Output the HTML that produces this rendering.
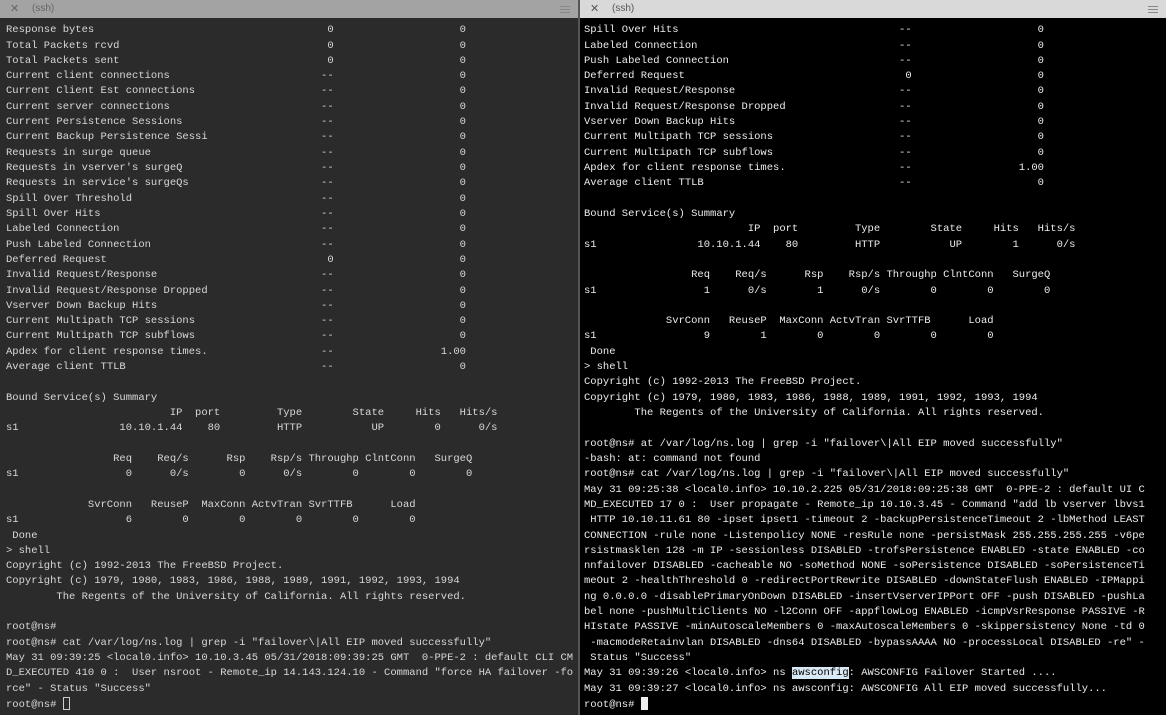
<!DOCTYPE html>
<html><head><meta charset="utf-8"><style>
*{margin:0;padding:0;box-sizing:border-box}
body{width:1166px;height:715px;overflow:hidden;background:#000;font-family:"Liberation Mono",monospace;font-size:10.5px;position:relative}
.pane{position:absolute;top:0;height:715px;overflow:hidden}
.L{left:0;width:578px;background:#2b2b2b;color:#d8d8d8}
.R{left:580px;width:586px;background:#000;color:#ececec}
.div{position:absolute;left:578px;top:0;width:2px;height:715px;background:#555}
.tb{height:18px;position:relative;font-family:"Liberation Sans",sans-serif;font-size:10px;line-height:18px}
.L .tb{background:#a3a3a3;color:#666}
.R .tb{background:#d9d9d9;color:#555}
.tb .x{position:absolute;left:10px;font-size:11px}
.tb .t{position:absolute;left:32px}
.tb .m{position:absolute;right:8px;top:6px;width:10px;height:7px;border-top:1px solid #888;border-bottom:1px solid #888}
.tb .m:after{content:"";position:absolute;left:0;right:0;top:2px;border-top:1px solid #888}
.body{position:absolute;top:23.2px;left:6px;right:0}
.R .body{left:4px}
.r{position:relative;height:15.32px;line-height:15.32px;white-space:pre}
.r i{position:absolute;top:0;font-style:normal}
.a{left:50ch}.b{left:51ch}.c{left:72ch}
.hl{background:#d8e8f4;color:#000}
.cur{display:inline-block;width:7px;height:13px;vertical-align:-3px;border:1px solid #ccc}
.curR{display:inline-block;width:7px;height:13px;vertical-align:-3px;background:#eee}
</style></head><body>
<div class="pane L">
<div class="tb"><span class="x">✕</span><span class="t">(ssh)</span><span class="m"></span></div>
<div class="body">
<div class="r">Response bytes<i class="b">0</i><i class="c">0</i></div>
<div class="r">Total Packets rcvd<i class="b">0</i><i class="c">0</i></div>
<div class="r">Total Packets sent<i class="b">0</i><i class="c">0</i></div>
<div class="r">Current client connections<i class="a">--</i><i class="c">0</i></div>
<div class="r">Current Client Est connections<i class="a">--</i><i class="c">0</i></div>
<div class="r">Current server connections<i class="a">--</i><i class="c">0</i></div>
<div class="r">Current Persistence Sessions<i class="a">--</i><i class="c">0</i></div>
<div class="r">Current Backup Persistence Sessi<i class="a">--</i><i class="c">0</i></div>
<div class="r">Requests in surge queue<i class="a">--</i><i class="c">0</i></div>
<div class="r">Requests in vserver's surgeQ<i class="a">--</i><i class="c">0</i></div>
<div class="r">Requests in service's surgeQs<i class="a">--</i><i class="c">0</i></div>
<div class="r">Spill Over Threshold<i class="a">--</i><i class="c">0</i></div>
<div class="r">Spill Over Hits<i class="a">--</i><i class="c">0</i></div>
<div class="r">Labeled Connection<i class="a">--</i><i class="c">0</i></div>
<div class="r">Push Labeled Connection<i class="a">--</i><i class="c">0</i></div>
<div class="r">Deferred Request<i class="b">0</i><i class="c">0</i></div>
<div class="r">Invalid Request/Response<i class="a">--</i><i class="c">0</i></div>
<div class="r">Invalid Request/Response Dropped<i class="a">--</i><i class="c">0</i></div>
<div class="r">Vserver Down Backup Hits<i class="a">--</i><i class="c">0</i></div>
<div class="r">Current Multipath TCP sessions<i class="a">--</i><i class="c">0</i></div>
<div class="r">Current Multipath TCP subflows<i class="a">--</i><i class="c">0</i></div>
<div class="r">Apdex for client response times.<i class="a">--</i><i style="left:69ch">1.00</i></div>
<div class="r">Average client TTLB<i class="a">--</i><i class="c">0</i></div>
<div class="r"> </div>
<div class="r">Bound Service(s) Summary</div>
<div class="r"><i style="left:26ch">IP</i><i style="left:30ch">port</i><i style="left:43ch">Type</i><i style="left:55ch">State</i><i style="left:65ch">Hits</i><i style="left:72ch">Hits/s</i></div>
<div class="r">s1<i style="left:18ch">10.10.1.44</i><i style="left:32ch">80</i><i style="left:43ch">HTTP</i><i style="left:58ch">UP</i><i style="left:68ch">0</i><i style="left:75ch">0/s</i></div>
<div class="r"> </div>
<div class="r"><i style="left:17ch">Req</i><i style="left:24ch">Req/s</i><i style="left:35ch">Rsp</i><i style="left:42ch">Rsp/s</i><i style="left:48ch">Throughp</i><i style="left:57ch">ClntConn</i><i style="left:68ch">SurgeQ</i></div>
<div class="r">s1<i style="left:19ch">0</i><i style="left:26ch">0/s</i><i style="left:37ch">0</i><i style="left:44ch">0/s</i><i style="left:55ch">0</i><i style="left:64ch">0</i><i style="left:73ch">0</i></div>
<div class="r"> </div>
<div class="r"><i style="left:13ch">SvrConn</i><i style="left:23ch">ReuseP</i><i style="left:31ch">MaxConn</i><i style="left:39ch">ActvTran</i><i style="left:48ch">SvrTTFB</i><i style="left:61ch">Load</i></div>
<div class="r">s1<i style="left:19ch">6</i><i style="left:28ch">0</i><i style="left:37ch">0</i><i style="left:46ch">0</i><i style="left:55ch">0</i><i style="left:64ch">0</i></div>
<div class="r"> Done</div>
<div class="r">&gt; shell</div>
<div class="r">Copyright (c) 1992-2013 The FreeBSD Project.</div>
<div class="r">Copyright (c) 1979, 1980, 1983, 1986, 1988, 1989, 1991, 1992, 1993, 1994</div>
<div class="r">        The Regents of the University of California. All rights reserved.</div>
<div class="r"> </div>
<div class="r">root@ns#</div>
<div class="r">root@ns# cat /var/log/ns.log | grep -i "failover\|All EIP moved successfully"</div>
<div class="r">May 31 09:39:25 &lt;local0.info&gt; 10.10.3.45 05/31/2018:09:39:25 GMT  0-PPE-2 : default CLI CM</div>
<div class="r">D_EXECUTED 410 0 :  User nsroot - Remote_ip 14.143.124.10 - Command "force HA failover -fo</div>
<div class="r">rce" - Status "Success"</div>
<div class="r">root@ns# <span class="cur"></span></div>
</div>
</div>
<div class="div"></div>
<div class="pane R">
<div class="tb"><span class="x">✕</span><span class="t">(ssh)</span><span class="m"></span></div>
<div class="body">
<div class="r">Spill Over Hits<i class="a">--</i><i class="c">0</i></div>
<div class="r">Labeled Connection<i class="a">--</i><i class="c">0</i></div>
<div class="r">Push Labeled Connection<i class="a">--</i><i class="c">0</i></div>
<div class="r">Deferred Request<i class="b">0</i><i class="c">0</i></div>
<div class="r">Invalid Request/Response<i class="a">--</i><i class="c">0</i></div>
<div class="r">Invalid Request/Response Dropped<i class="a">--</i><i class="c">0</i></div>
<div class="r">Vserver Down Backup Hits<i class="a">--</i><i class="c">0</i></div>
<div class="r">Current Multipath TCP sessions<i class="a">--</i><i class="c">0</i></div>
<div class="r">Current Multipath TCP subflows<i class="a">--</i><i class="c">0</i></div>
<div class="r">Apdex for client response times.<i class="a">--</i><i style="left:69ch">1.00</i></div>
<div class="r">Average client TTLB<i class="a">--</i><i class="c">0</i></div>
<div class="r"> </div>
<div class="r">Bound Service(s) Summary</div>
<div class="r"><i style="left:26ch">IP</i><i style="left:30ch">port</i><i style="left:43ch">Type</i><i style="left:55ch">State</i><i style="left:65ch">Hits</i><i style="left:72ch">Hits/s</i></div>
<div class="r">s1<i style="left:18ch">10.10.1.44</i><i style="left:32ch">80</i><i style="left:43ch">HTTP</i><i style="left:58ch">UP</i><i style="left:68ch">1</i><i style="left:75ch">0/s</i></div>
<div class="r"> </div>
<div class="r"><i style="left:17ch">Req</i><i style="left:24ch">Req/s</i><i style="left:35ch">Rsp</i><i style="left:42ch">Rsp/s</i><i style="left:48ch">Throughp</i><i style="left:57ch">ClntConn</i><i style="left:68ch">SurgeQ</i></div>
<div class="r">s1<i style="left:19ch">1</i><i style="left:26ch">0/s</i><i style="left:37ch">1</i><i style="left:44ch">0/s</i><i style="left:55ch">0</i><i style="left:64ch">0</i><i style="left:73ch">0</i></div>
<div class="r"> </div>
<div class="r"><i style="left:13ch">SvrConn</i><i style="left:23ch">ReuseP</i><i style="left:31ch">MaxConn</i><i style="left:39ch">ActvTran</i><i style="left:48ch">SvrTTFB</i><i style="left:61ch">Load</i></div>
<div class="r">s1<i style="left:19ch">9</i><i style="left:28ch">1</i><i style="left:37ch">0</i><i style="left:46ch">0</i><i style="left:55ch">0</i><i style="left:64ch">0</i></div>
<div class="r"> Done</div>
<div class="r">&gt; shell</div>
<div class="r">Copyright (c) 1992-2013 The FreeBSD Project.</div>
<div class="r">Copyright (c) 1979, 1980, 1983, 1986, 1988, 1989, 1991, 1992, 1993, 1994</div>
<div class="r">        The Regents of the University of California. All rights reserved.</div>
<div class="r"> </div>
<div class="r">root@ns# at /var/log/ns.log | grep -i "failover\|All EIP moved successfully"</div>
<div class="r">-bash: at: command not found</div>
<div class="r">root@ns# cat /var/log/ns.log | grep -i "failover\|All EIP moved successfully"</div>
<div class="r">May 31 09:25:38 &lt;local0.info&gt; 10.10.2.225 05/31/2018:09:25:38 GMT  0-PPE-2 : default UI C</div>
<div class="r">MD_EXECUTED 17 0 :  User propagate - Remote_ip 10.10.3.45 - Command "add lb vserver lbvs1</div>
<div class="r"> HTTP 10.10.11.61 80 -ipset ipset1 -timeout 2 -backupPersistenceTimeout 2 -lbMethod LEAST</div>
<div class="r">CONNECTION -rule none -Listenpolicy NONE -resRule none -persistMask 255.255.255.255 -v6pe</div>
<div class="r">rsistmasklen 128 -m IP -sessionless DISABLED -trofsPersistence ENABLED -state ENABLED -co</div>
<div class="r">nnfailover DISABLED -cacheable NO -soMethod NONE -soPersistence DISABLED -soPersistenceTi</div>
<div class="r">meOut 2 -healthThreshold 0 -redirectPortRewrite DISABLED -downStateFlush ENABLED -IPMappi</div>
<div class="r">ng 0.0.0.0 -disablePrimaryOnDown DISABLED -insertVserverIPPort OFF -push DISABLED -pushLa</div>
<div class="r">bel none -pushMultiClients NO -l2Conn OFF -appflowLog ENABLED -icmpVsrResponse PASSIVE -R</div>
<div class="r">HIstate PASSIVE -minAutoscaleMembers 0 -maxAutoscaleMembers 0 -skippersistency None -td 0</div>
<div class="r"> -macmodeRetainvlan DISABLED -dns64 DISABLED -bypassAAAA NO -processLocal DISABLED -re" -</div>
<div class="r"> Status "Success"</div>
<div class="r">May 31 09:39:26 &lt;local0.info&gt; ns <span class="hl">awsconfig</span>: AWSCONFIG Failover Started ....</div>
<div class="r">May 31 09:39:27 &lt;local0.info&gt; ns awsconfig: AWSCONFIG All EIP moved successfully...</div>
<div class="r">root@ns# <span class="curR"></span></div>
</div>
</div>
</body></html>
